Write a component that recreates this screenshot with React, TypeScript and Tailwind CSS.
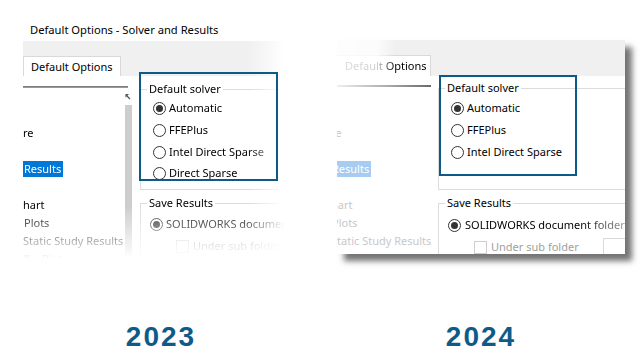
import type { ReactNode } from 'react';

const BLUE = 'border-[#0b5a88]';

function Radio({ on }: { on?: boolean }) {
  return (
    <span className="flex h-[13px] w-[13px] shrink-0 items-center justify-center rounded-full border border-[#333333] bg-white">
      {on && <span className="h-[7px] w-[7px] rounded-full bg-[#333333]" />}
    </span>
  );
}

function Group({ label, className, children }: { label: string; className: string; children: ReactNode }) {
  return (
    <div className={`relative w-[210px] shrink-0 border border-[#dcdcdc] ${className}`}>
      <span className="absolute left-[6px] top-[-9px] bg-white px-[2px] leading-[16px]">{label}</span>
      {children}
    </div>
  );
}

function Year({ children }: { children: string }) {
  return (
    <div className="mb-[9px] mt-auto pl-[2px] text-center font-['Liberation_Sans',Arial,sans-serif] text-[28px] font-bold leading-[28px] tracking-[2px] text-[#0f5b88]">
      {children}
    </div>
  );
}

// rows of the options tree, 18px each; only the part that shows in the crop
function TreeRows({ hl, text }: { hl: string; text: string }) {
  return (
    <>
      <div className="h-[18px]" />
      <div className="h-[18px]" />
      <div className={`h-[18px] ${text}`}>re</div>
      <div className="h-[18px]" />
      <div className="h-[18px]">
        <span className={`mt-[1px] inline-block pl-[1px] pr-[2px] leading-[16px] text-white ${hl}`}>Results</span>
      </div>
      <div className="h-[18px]" />
      <div className={`h-[18px] ${text}`}>hart</div>
      <div className={`h-[18px] pl-[1px] ${text}`}>Plots</div>
      <div className={`h-[18px] whitespace-nowrap ${text}`}>Static Study Results</div>
      <div className={`flex h-[18px] items-center gap-[12px] ${text}`}>
        <span className="h-[9px] w-[7px] rounded-[1px] bg-[#d9534f]" />
        Plot
      </div>
    </>
  );
}

export default function App() {
  return (
    <div className="flex h-[360px] w-[640px] overflow-hidden bg-white font-['Segoe_UI','Noto_Sans',sans-serif] text-[11px] text-black">
      {/* 2023 */}
      <div className="relative flex w-[320px] flex-col">
        <div className="ml-[30px] mt-[22px] text-[11.2px] leading-[16px]">Default Options - Solver and Results</div>
        <div className="ml-[23px] mt-[3px] w-[262px] [mask-image:linear-gradient(to_bottom,black_165px,transparent_218px)]">
          <div className="h-[222px] overflow-hidden [mask-image:linear-gradient(to_right,black_225px,transparent_262px)]">
            <div className="flex h-[35px] items-end bg-[#f0f0f0]">
              <div className="h-[20px] w-[98px] whitespace-nowrap border border-b-0 border-[#d9d9d9] bg-white pl-[7px] leading-[19px]">
                Default Options
              </div>
            </div>
            <div className="flex">
              <div className="w-[109px] shrink-0">
                <div className="mt-[10px] h-[2px] w-[105px] bg-gradient-to-b from-[#707070] to-[#a8a8a8]" />
                <div className="flex">
                  <div className="w-[102px] overflow-hidden leading-[18px]">
                    <TreeRows hl="bg-[#0078d7]" text="text-black" />
                  </div>
                  <div className="flex w-[7px] flex-col">
                    <svg width="7" height="17" viewBox="0 0 7 17">
                      <path d="M0.5 6 L4 6 L0.5 9.5 Z" fill="#555" />
                      <path d="M1 7 L5 11" stroke="#555" strokeWidth="1.2" />
                    </svg>
                    <div className="h-[160px] bg-[#cdcdcd]" />
                  </div>
                </div>
              </div>
              <div className="ml-[8px] min-w-0 flex-1">
                <Group label="Default solver" className="mt-[13px] h-[101px] pt-[7px]">
                  {['Automatic', 'FFEPlus', 'Intel Direct Sparse', 'Direct Sparse'].map((s, i) => (
                    <div key={s} className={`flex items-center gap-[3px] pl-[12px] ${i === 3 ? 'h-[20px]' : 'h-[22px]'}`}>
                      <Radio on={i === 0} />
                      <span className="whitespace-nowrap">{s}</span>
                    </div>
                  ))}
                </Group>
                <Group label="Save Results" className="mt-[13px] h-[80px] pt-[9px]">
                  <div className="flex h-[22px] items-center gap-[3px] pl-[9px]">
                    <Radio on />
                    <span className="whitespace-nowrap">SOLIDWORKS document folder</span>
                  </div>
                  <div className="flex h-[22px] items-center gap-[4px] pl-[35px] text-[#9a9a9a]">
                    <span className="h-[13px] w-[13px] border border-[#cfcfcf] bg-white" />
                    <span className="whitespace-nowrap">Under sub folder</span>
                  </div>
                </Group>
              </div>
            </div>
          </div>
        </div>
        <div className={`absolute left-[139px] top-[72px] h-[109px] w-[139px] border-2 ${BLUE}`} />
        <Year>2023</Year>
      </div>

      {/* 2024 */}
      <div className="relative flex w-[320px] flex-col">
        <div className="ml-[17px] mt-[40px] h-[214px] w-[288px] overflow-hidden bg-white shadow-[7px_7px_6px_rgba(0,0,0,0.55)]">
          <div className="flex h-[36px] items-end bg-[#f0f0f0] [mask-image:linear-gradient(to_right,rgba(0,0,0,0.15)_8px,rgba(0,0,0,0.2)_40px,black_58px)]">
            <div className="h-[21px] w-[94px] whitespace-nowrap border-r border-t border-[#d9d9d9] bg-white pl-[8px] leading-[20px]">
              Default Options
            </div>
          </div>
          <div className="flex">
            <div className="w-[94px] shrink-0 overflow-hidden">
              <div className="mt-[9px] h-[2px] bg-gradient-to-r from-[#efefef] via-[#b0b0b0] to-[#6a6a6a]" />
              <div className="ml-[-6px] mt-[1px] leading-[18px]">
                <TreeRows hl="bg-[#a6cdf1]" text="text-[#c8c8c8]" />
              </div>
            </div>
            <div className="ml-[7px] min-w-0 flex-1 overflow-hidden">
              <Group label="Default solver" className="mt-[12px] h-[102px] pt-[8px]">
                {['Automatic', 'FFEPlus', 'Intel Direct Sparse'].map((s, i) => (
                  <div key={s} className="flex h-[22px] items-center gap-[3px] pl-[12px]">
                    <Radio on={i === 0} />
                    <span className="whitespace-nowrap">{s}</span>
                  </div>
                ))}
              </Group>
              <Group label="Save Results" className="mt-[13px] h-[80px] pt-[10px]">
                <div className="flex h-[22px] items-center gap-[4px] pl-[9px]">
                  <Radio on />
                  <span className="whitespace-nowrap [mask-image:linear-gradient(to_right,black_115px,rgba(0,0,0,0.3)_165px)]">
                    SOLIDWORKS document folder
                  </span>
                </div>
                <div className="flex h-[22px] items-center">
                  <div className="flex w-[164px] shrink-0 items-center gap-[4px] pl-[35px] text-[#a0a0a0]">
                    <span className="h-[13px] w-[13px] shrink-0 border border-[#cfcfcf] bg-white" />
                    <span className="whitespace-nowrap">Under sub folder</span>
                  </div>
                  <span className="h-[19px] w-[30px] border border-[#dadada]" />
                </div>
              </Group>
            </div>
          </div>
        </div>
        <div className={`absolute left-[119px] top-[75px] h-[101px] w-[138px] border-2 ${BLUE}`} />
        <Year>2024</Year>
      </div>
    </div>
  );
}
